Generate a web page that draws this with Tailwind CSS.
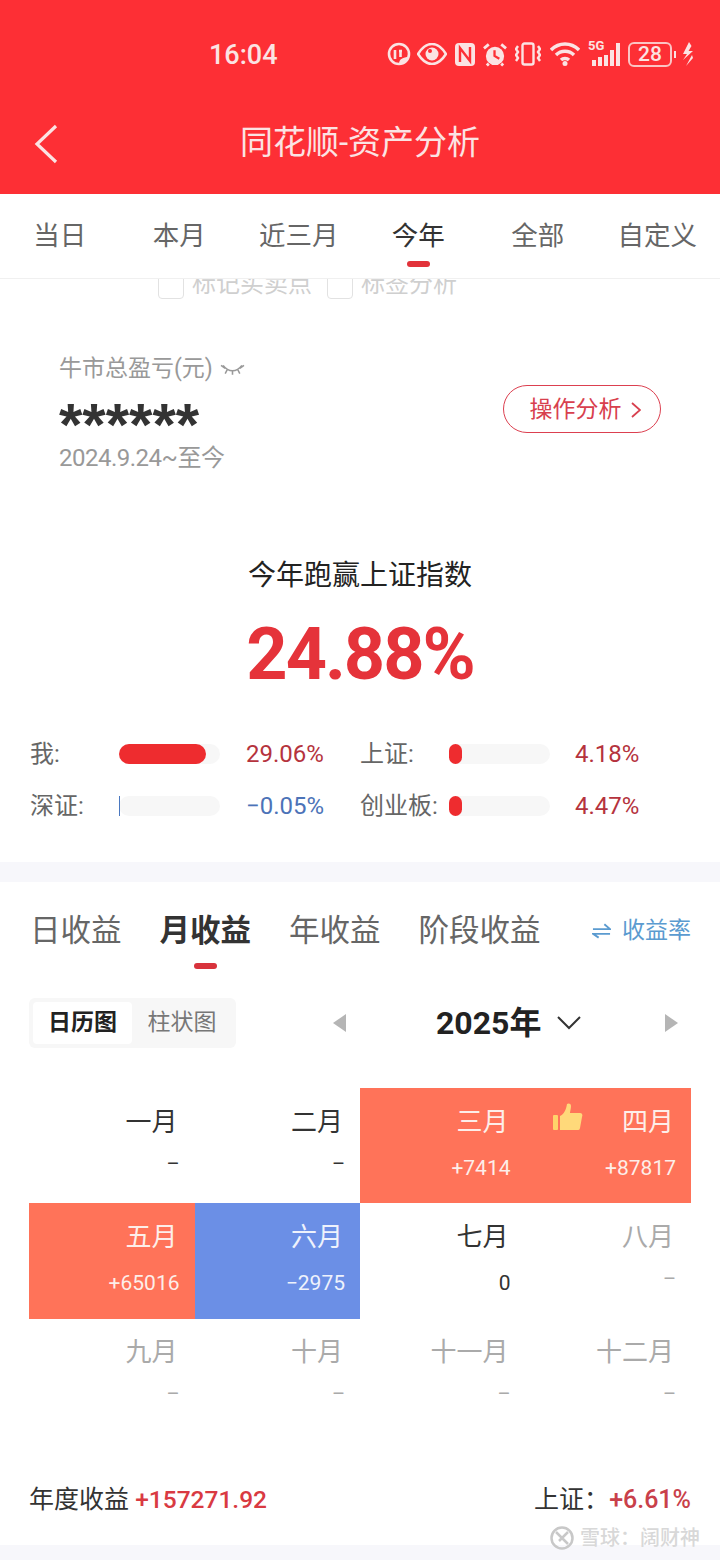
<!DOCTYPE html>
<html lang="zh-CN">
<head>
    <meta charset="UTF-8">
    <title>同花顺-资产分析</title>
    <script src="https://cdn.jsdelivr.net/npm/@tailwindcss/browser@4"></script>
</head>
<body class="bg-white">
<div class="relative w-[720px] h-[1560px] overflow-hidden bg-white font-['Roboto','Noto_Sans_CJK_SC',sans-serif] text-[#333]">

    <!-- header -->
    <div class="h-[194px] bg-[#fd2f35] text-white flex flex-col">
        <div class="h-[108px] pt-[37px] pl-[209px] flex items-start">
            <span class="w-[70px] text-[27px] leading-[36px] font-medium text-[#fbe3e3]">16:04</span>
            <div class="ml-[108px] h-[34px] flex items-center text-[#fbe3e3]">
                <svg class="w-[24px] h-[24px]" viewBox="0 0 24 24" fill="none" stroke="currentColor" stroke-width="2.600"><circle cx="12" cy="12" r="10"/><path d="M8 8v9M12 9h3M13.500 9v6"/><path d="M12 22c0-5 4-7 10-7-1 5-4 7-10 7z" fill="currentColor" stroke="none"/></svg>
                <svg class="ml-[6px] w-[30px] h-[22px]" viewBox="0 0 30 22"><path d="M1 11C6 3 11 1 15 1s9 2 14 10c-5 8-10 10-14 10S6 19 1 11z" fill="none" stroke="currentColor" stroke-width="2.600"/><circle cx="15" cy="11" r="6.500" fill="currentColor"/><circle cx="13" cy="8" r="2" fill="#fd2f35"/></svg>
                <svg class="ml-[8px] w-[20px] h-[23px]" viewBox="0 0 20 23"><rect x="0" y="0" width="20" height="23" rx="4" fill="currentColor"/><path d="M5 19V5l10 13V4" fill="none" stroke="#fd2f35" stroke-width="2.400"/></svg>
                <svg class="ml-[8px] w-[24px] h-[25px]" viewBox="0 0 25 25"><circle cx="12.500" cy="14" r="9.500" fill="currentColor"/><path d="M12 8v6l5 3" fill="none" stroke="#fd2f35" stroke-width="2.400"/><path d="M1 6l5-4M24 6l-5-4M6 22l-2 2M19 22l2 2" stroke="currentColor" stroke-width="3"/></svg>
                <svg class="ml-[8px] w-[26px] h-[24px]" viewBox="0 0 26 24" fill="none" stroke="currentColor" stroke-width="2.400"><rect x="7.500" y="1.500" width="11" height="21" rx="2"/><path d="M3 4l-2 3 2 3-2 3 2 3-2 3M23 4l2 3-2 3 2 3-2 3 2 3"/></svg>
                <svg class="ml-[9px] w-[30px] h-[24px]" viewBox="0 0 30 24" fill="none" stroke="currentColor" stroke-width="3.400"><path d="M1 8c8-8 20-8 28 0M6 13c5-5 13-5 18 0M11 18c2-2 6-2 8 0"/><circle cx="15" cy="21.500" r="2.500" fill="currentColor" stroke="none"/></svg>
                <div class="ml-[8px] relative w-[32px] h-[24px]">
                    <span class="absolute left-0 top-[-2px] text-[13px] leading-[12px] font-bold">5G</span>
                    <div class="absolute inset-0 flex items-end justify-end gap-[2px]">
                        <i class="w-[4px] h-[6px] bg-current"></i><i class="w-[4px] h-[9px] bg-current"></i><i class="w-[4px] h-[11px] bg-current"></i><i class="w-[4px] h-[16px] bg-current"></i><i class="w-[4px] h-[23px] bg-current"></i>
                    </div>
                </div>
                <div class="ml-[8px] w-[44px] h-[25px] rounded-[6px] border-2 border-[#fbc4c4] flex items-center justify-center text-[21px] font-medium leading-none">28</div>
                <i class="ml-[2px] w-[2px] h-[7px] bg-current"></i>
                <svg class="ml-[6px] w-[12px] h-[24px]" viewBox="0 0 12 24" fill="currentColor"><path d="M7 0L1 12h4l-4 6 10-9H6.500l3-5zM10 13L4 24l7-8z"/></svg>
            </div>
        </div>
        <div class="h-[70px] relative flex items-center justify-center">
            <svg class="absolute left-[34px] top-[16px] w-[26px] h-[40px]" viewBox="0 0 26 40" fill="none" stroke="#fbe3e3" stroke-width="3.200"><path d="M22 2L3 20l19 18"/></svg>
            <span class="text-[33px] leading-[40px] text-[#fbe3e3]">同花顺-资产分析</span>
        </div>
    </div>

    <!-- period tabs -->
    <div class="h-[85px] pr-[3px] border-b border-[#f0f0f0] grid grid-cols-6 text-[26.500px] text-[#666] text-center">
        <div class="pt-[22px] leading-[40px]">当日</div>
        <div class="pt-[22px] leading-[40px]">本月</div>
        <div class="pt-[22px] leading-[40px]">近三月</div>
        <div class="relative pt-[22px] leading-[40px] text-[#333]">今年<i class="absolute left-[48px] top-[67px] w-[23px] h-[6px] rounded-full bg-[#e2323a]"></i></div>
        <div class="pt-[22px] leading-[40px]">全部</div>
        <div class="pt-[22px] leading-[40px]">自定义</div>
    </div>

    <!-- clipped checkboxes -->
    <div class="h-[20px] overflow-hidden pl-[158px] flex items-end gap-[8px] text-[24px] leading-[36px] text-[#cfcfcf]">
        <div class="shrink-0 w-[26px] h-[26px] rounded-[4px] border border-[#e2e2e2]"></div>
        <span class="shrink-0 mb-[-3px] w-[120px]">标记买卖点</span>
        <div class="shrink-0 ml-[7px] w-[26px] h-[26px] rounded-[4px] border border-[#e2e2e2]"></div>
        <span class="shrink-0 mb-[-3px]">标签分析</span>
    </div>

    <!-- summary -->
    <div class="h-[265px] pl-[59px] pr-[59px] pt-[54px] flex items-start justify-between">
        <div>
            <div class="flex items-center h-[32px] text-[23px] text-[#999]">牛市总盈亏(元)
                <svg class="ml-[7px] w-[25px] h-[13px]" viewBox="0 0 24 12" fill="none" stroke="#999" stroke-width="1.500"><path d="M3 2c5 7 13 7 18 0M1 2l4 3M12 7v4M7 6L5 10M17 6l2 4M23 2l-4 3"/></svg>
            </div>
            <div class="mt-[10px] h-[42px] text-[60px] leading-[60px] font-bold text-[#333] font-['Liberation_Sans','Noto_Sans_CJK_SC',sans-serif]">******</div>
            <div class="mt-[4px] text-[24px] leading-[34px] text-[#999] tracking-[-0.5px]">2024.9.24~至今</div>
        </div>
        <div class="mt-[32px] w-[158px] h-[48px] pl-[6px] pt-[2px] rounded-full border border-[#dc4050] flex items-center justify-center gap-[9px] text-[23px] text-[#d8404e]">操作分析
            <svg class="w-[10px] h-[18px]" viewBox="0 0 10 18" fill="none" stroke="#d8404e" stroke-width="1.800"><path d="M1 2l8 7-8 7"/></svg>
        </div>
    </div>

    <!-- beat index -->
    <div class="text-center">
        <div class="text-[28px] leading-[40px] text-[#222] h-[40px] -mt-[8px]">今年跑赢上证指数</div>
        <div class="mt-[19px] text-[72px] leading-[80px] font-bold tracking-[-2px] text-[#e5333a]">24.88%</div>
    </div>

    <!-- compare rows -->
    <div class="mt-[46px] pl-[30px] grid grid-cols-[330px_330px] gap-y-[26px] text-[24px] text-[#666]">
        <div class="flex items-center h-[26px]">
            <span class="w-[89px]">我:</span>
            <div class="w-[101px] h-[20px] rounded-full bg-[#f7f7f7]"><div class="h-full rounded-full bg-[#ee2c2f]" style="width:87px"></div></div>
            <span class="ml-[26px] text-[#b5333d]">29.06%</span>
        </div>
        <div class="flex items-center h-[26px]">
            <span class="w-[89px]">上证:</span>
            <div class="w-[101px] h-[20px] rounded-full bg-[#f7f7f7]"><div class="h-full rounded-full bg-[#ee2c2f]" style="width:13px"></div></div>
            <span class="ml-[25px] text-[#b5333d]">4.18%</span>
        </div>
        <div class="flex items-center h-[26px]">
            <span class="w-[89px]">深证:</span>
            <div class="w-[101px] h-[20px] rounded-full bg-[#f7f7f7]"><div class="h-full bg-[#4a78c0]" style="width:1px"></div></div>
            <span class="ml-[26px] text-[#4c73b8]">−0.05%</span>
        </div>
        <div class="flex items-center h-[26px]">
            <span class="w-[89px]">创业板:</span>
            <div class="w-[101px] h-[20px] rounded-full bg-[#f7f7f7]"><div class="h-full rounded-full bg-[#ee2c2f]" style="width:13px"></div></div>
            <span class="ml-[25px] text-[#b5333d]">4.47%</span>
        </div>
    </div>

    <!-- divider -->
    <div class="mt-[43px] h-[20px] bg-[#f7f7fb]"></div>

    <!-- income tabs -->
    <div class="h-[116px] pl-[30px] pr-[29px] pt-[27px] flex items-start text-[30.500px] leading-[44px] text-[#666]">
        <span>日收益</span>
        <span class="relative ml-[38px] font-bold text-[#333]">月收益<i class="absolute left-[34px] top-[54px] w-[23px] h-[6px] rounded-full bg-[#d8333c]"></i></span>
        <span class="ml-[38px]">年收益</span>
        <span class="ml-[38px]">阶段收益</span>
        <span class="ml-auto flex items-center text-[23px] text-[#5b9bd0]">
            <svg class="mr-[11px] w-[19px] h-[16px]" viewBox="0 0 20 16" fill="none" stroke="#5b9bd0" stroke-width="2"><path d="M1 6h18L13 1M19 11H1l6 4"/></svg>收益率
        </span>
    </div>

    <!-- chart toggle, year -->
    <div class="pl-[29px] flex items-center h-[50px]">
        <div class="w-[207px] h-[50px] rounded-[6px] bg-[#f7f7f7] p-[4px] flex items-center text-[23px]">
            <div class="w-[99px] h-[42px] rounded-[4px] bg-white flex items-center justify-center font-bold text-[#222]">日历图</div>
            <div class="w-[100px] text-center text-[#777]">柱状图</div>
        </div>
        <svg class="ml-[96px] w-[16px] h-[20px]" viewBox="0 0 16 20" fill="#b5b5b5"><path d="M14 1v18L1 10z"/></svg>
        <span class="ml-[88px] text-[32px] leading-[44px] font-bold text-[#222]">2025年</span>
        <svg class="ml-[16px] w-[24px] h-[14px]" viewBox="0 0 24 14" fill="none" stroke="#333" stroke-width="2"><path d="M1 1l11 11L23 1"/></svg>
        <svg class="ml-[82px] w-[16px] h-[20px]" viewBox="0 0 16 20" fill="#b5b5b5"><path d="M2 1v18l13-9z"/></svg>
    </div>

    <!-- calendar -->
    <div class="relative mt-[40px] ml-[29px] w-[662px] grid grid-cols-4 grid-rows-[115px_116px_115px] text-right text-[26px] leading-[36px]">
        <div class="pr-[15px] pt-[16px] text-[#333]"><div class="pr-[2px]">一月</div><div class="mt-[9px] text-[20px] leading-[30px]">–</div></div>
        <div class="pr-[15px] pt-[16px] text-[#333]"><div class="pr-[2px]">二月</div><div class="mt-[9px] text-[20px] leading-[30px]">–</div></div>
        <div class="pr-[15px] pt-[16px] bg-[#ff7359] text-[#fdeee9]"><div class="pr-[2px]">三月</div><div class="mt-[13px] text-[21px] leading-[30px]">+7414</div></div>
        <div class="pr-[15px] pt-[16px] bg-[#ff7359] text-[#fdeee9]"><div class="pr-[2px]">四月</div><div class="mt-[13px] text-[21px] leading-[30px]">+87817</div></div>
        <div class="pr-[15px] pt-[16px] bg-[#ff7359] text-[#fdeee9]"><div class="pr-[2px]">五月</div><div class="mt-[13px] text-[21px] leading-[30px]">+65016</div></div>
        <div class="pr-[15px] pt-[16px] bg-[#6b8fe6] text-[#eef2fc]"><div class="pr-[2px]">六月</div><div class="mt-[13px] text-[21px] leading-[30px]">−2975</div></div>
        <div class="pr-[15px] pt-[16px] text-[#333]"><div class="pr-[2px]">七月</div><div class="mt-[13px] text-[21px] leading-[30px]">0</div></div>
        <div class="pr-[15px] pt-[16px] text-[#aaa]"><div class="pr-[2px]">八月</div><div class="mt-[9px] text-[20px] leading-[30px]">–</div></div>
        <div class="pr-[15px] pt-[15px] text-[#aaa]"><div class="pr-[2px]">九月</div><div class="mt-[9px] text-[20px] leading-[30px]">–</div></div>
        <div class="pr-[15px] pt-[15px] text-[#aaa]"><div class="pr-[2px]">十月</div><div class="mt-[9px] text-[20px] leading-[30px]">–</div></div>
        <div class="pr-[15px] pt-[15px] text-[#aaa]"><div class="pr-[2px]">十一月</div><div class="mt-[9px] text-[20px] leading-[30px]">–</div></div>
        <div class="pr-[15px] pt-[15px] text-[#aaa]"><div class="pr-[2px]">十二月</div><div class="mt-[9px] text-[20px] leading-[30px]">–</div></div>
        <!-- thumb on best month -->
        <svg class="absolute left-[524px] top-[15px] w-[30px] h-[28px]" viewBox="0 0 30 28"><rect x="0" y="12" width="5" height="15" rx="1" fill="#ffd36a"/><path d="M7 13c4-2 6-6 7-12 1-1 4-1 4 2 0 3-1 5-1 7h10c2 0 3 2 2 4l-2 11c-.5 2-1 2-3 2H7z" fill="#ffd97a"/></svg>
    </div>

    <!-- year total -->
    <div class="mt-[48px] px-[29px] flex items-center justify-between h-[36px] text-[25px] text-[#333]">
        <div>年度收益 <span class="text-[24.500px] text-[#d93a42] font-medium">+157271.92</span></div>
        <div>上证：<span class="text-[#c9404a] font-medium">+6.61%</span></div>
    </div>

    <div class="absolute left-0 right-0 bottom-0 h-[15px] bg-[#f7f7fb]"></div>

    <!-- watermark -->
    <div class="absolute right-[20px] bottom-[8px] flex items-center text-[20px] leading-[28px] font-medium text-[#d8d8d8]">
        <svg class="mr-[6px] w-[24px] h-[24px]" viewBox="0 0 24 24" fill="none" stroke="#c8c8c8" stroke-width="2.500"><circle cx="12" cy="12" r="10.500"/><path d="M6 6l9 9M18 6l-9 9M15 15l3 3"/></svg>
        雪球：阔财神
    </div>
</div>
</body>
</html>
